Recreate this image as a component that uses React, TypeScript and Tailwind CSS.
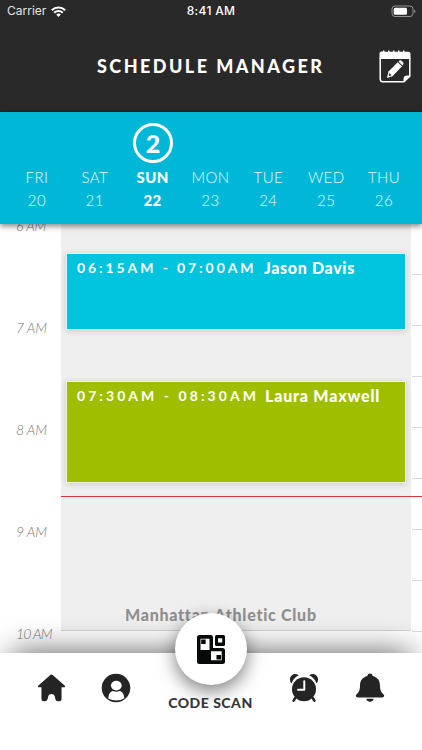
import React from "react";

const days = [
  { name: "FRI", date: "20" },
  { name: "SAT", date: "21" },
  { name: "SUN", date: "22", count: 2 },
  { name: "MON", date: "23" },
  { name: "TUE", date: "24" },
  { name: "WED", date: "25" },
  { name: "THU", date: "26" },
];

function StatusBar() {
  return (
    <div className="grid h-[22px] grid-cols-3 items-center pl-[7px] pr-[6px] font-['Inter','Liberation_Sans',sans-serif] text-[12px] leading-none text-white">
      <div className="flex items-center gap-[5px]">
        <span className="text-[12px] text-[#e4e4e4]">Carrier</span>
        <svg width="15" height="11" viewBox="0 0 15 11" fill="none" stroke="white" strokeWidth="2">
          <path d="M.8 4.2a9.7 9.7 0 0 1 13.4 0" />
          <path d="M3.2 6.7a6.2 6.2 0 0 1 8.6 0" />
          <path d="M5.2 8.5a3.3 3.3 0 0 1 4.6 0L7.5 10.9z" fill="white" stroke="none" />
        </svg>
      </div>
      <div className="-ml-px text-center font-medium tracking-[0.3px] whitespace-nowrap">8:41 AM</div>
      <svg className="justify-self-end" width="26" height="13" viewBox="0 0 26 13">
        <rect x="2" y="1" width="21" height="10.5" rx="3" fill="none" stroke="#929292" />
        <rect x="3.7" y="2.7" width="13.3" height="7.1" rx="1.5" fill="white" />
        <path d="M24.3 4.4v3.7c1.6-.5 1.6-3.2 0-3.7" fill="#929292" />
      </svg>
    </div>
  );
}

function NoteIcon() {
  return (
    <svg width="34" height="36" viewBox="0 0 34 36">
      <path d="M1.500 10V4.500Q1.500 2.500 3.500 2.500H5V1.500h1.500v1.300H10V1.500h1.500v1.300H15V1.500h1.500v1.300H20V1.500h1.500v1.300H25V1.500h1.500v1.300H30.500q2 0 2 2V10z" fill="white" />
      <path d="M2.200 9v21q0 2.800 2.800 2.800h21l5.800-5.500V9" fill="none" stroke="white" strokeWidth="1.500" />
      <path d="M26 33v-3.500q0-2.500 2.500-2.500H32z" fill="white" stroke="white" strokeLinejoin="round" />
      <path d="m9 29 1.500-6.500L19.700 13.300l4.300 4L14.500 27.300z" fill="white" />
      <path d="m20.500 12.500.8-.8q1.300-.8 2.500.3l1.100 1.100q1.200 1.300.2 2.600l-.7.7z" fill="white" />
      <path d="m11.300 24 2.300 2.300-2.300.7-.5-.5z" fill="#292929" />
    </svg>
  );
}

function HomeIcon() {
  return (
    <svg width="30" height="30" viewBox="0 0 30 30" fill="#242424">
      <path d="M13.8 1.5Q15 .7 16.2 1.5l12.7 11.2q1 1.2-.5 1.6H25.4V26q0 2.6-2.6 2.6h-1.2q-2 0-2.5-2l-.8-3.1c-.8-3-5.8-3-6.6 0l-.8 3.1q-.5 2-2.5 2H7.2Q4.6 28.6 4.6 26V14.3H1.7q-1.6-.4-.5-1.6z" />
    </svg>
  );
}

function UserIcon() {
  return (
    <svg width="30" height="30" viewBox="0 0 30 30">
      <circle cx="15" cy="15" r="14.3" fill="#242424" />
      <ellipse cx="15.3" cy="12.6" rx="5.4" ry="4.8" fill="white" />
      <path d="M7.3 25.5c.3-4.8 2.4-7 4.5-7.4q3.5 1.100 7 0c2.100.4 4.200 2.600 4.500 7.200q-3.800 2.200-8 2.200t-8-2z" fill="white" />
    </svg>
  );
}

function AlarmIcon() {
  return (
    <svg width="30" height="30" viewBox="0 0 30 30" fill="#242424">
      <path d="M2.500 10.500C-2 5.500 4-2 9.800 2.300C6.200 4 4 6.800 2.500 10.500M27.500 10.500C32 5.500 26-2 20.200 2.300C23.800 4 26 6.800 27.500 10.500" />
      <circle cx="15" cy="16.3" r="12" />
      <path d="m6.300 25-1.700 2.600M23.700 25l1.700 2.600" stroke="#242424" strokeWidth="2.600" strokeLinecap="round" />
      <path d="M15.300 8.200v8.500H9" fill="none" stroke="white" strokeWidth="2" strokeLinecap="round" strokeLinejoin="round" />
    </svg>
  );
}

function BellIcon() {
  return (
    <svg width="30" height="30" viewBox="0 0 30 30" fill="#242424">
      <path d="M12.4 3c.2-3.300 5-3.300 5.200 0C22.800 4.300 25 8 25 12.500c0 4.500 1 6.600 3.600 8.900 1.200 1.500.4 3-1.300 3H2.700c-1.700 0-2.500-1.500-1.300-3C4 19.100 5 17 5 12.500 5 8 7.200 4.300 12.400 3M11.300 25.700h7.400c-.4 4-7 4-7.400 0" />
    </svg>
  );
}

function CodeIcon() {
  return (
    <svg width="28" height="29" viewBox="0 0 28 29" fill="#050a08">
      <path d="M2.5 0H13.5Q16 0 16 2.5V13H25.500Q28 13 28 15.500V26.500Q28 29 25.500 29H2.500Q0 29 0 26.500V2.500Q0 0 2.500 0z" />
      <path d="M3.500 3.700H12.500V15H3.500zM14 16.300H24.700V25.200H14z" fill="white" />
      <rect x="4.2" y="4.500" width="4.500" height="4.500" />
      <rect x="19.500" y="20" width="4.600" height="4.500" />
      <rect x="18" y="0" width="10" height="11" rx="1.500" />
      <rect x="21" y="3.300" width="4.200" height="4.200" fill="white" />
    </svg>
  );
}

function Booking({ time, name, className, timeClass, nameClass }: { time: string; name: string; className: string; timeClass: string; nameClass: string }) {
  return (
    <div className={`mx-[5px] flex shrink-0 items-start border border-white/85 pl-[10px] leading-[20px] text-white shadow-[0_1px_6px_rgba(0,0,0,0.16)] ${className}`}>
      <span className={`mt-[4px] shrink-0 text-[14px] font-bold whitespace-nowrap ${timeClass}`}>{time}</span>
      <span className={`mt-[4px] text-[16px] font-black whitespace-nowrap ${nameClass}`}>{name}</span>
    </div>
  );
}

export default function App() {
  return (
    <div className="flex h-[750px] w-[422px] flex-col overflow-hidden bg-white font-['Lato','Liberation_Sans',sans-serif]">
      <header className="h-[112px] shrink-0 bg-[#292929]">
        <StatusBar />
        <div className="flex h-[90px] items-start pr-[10px] pl-[97px]">
          <h1 className="mt-[32px] w-[282px] text-[18px] leading-[24px] font-black tracking-[2.45px] whitespace-nowrap text-white">SCHEDULE MANAGER</h1>
          <div className="mt-[27px]"><NoteIcon /></div>
        </div>
      </header>

      <div className="relative z-10 grid h-[112px] shrink-0 grid-cols-7 bg-[#00b7d8] pr-[9px] pl-[8px] text-white shadow-[0_2px_6px_rgba(0,0,0,0.5)]">
        {days.map((day) => (
          <div key={day.name} className={`flex flex-col items-center pt-[10px] text-[15px] ${day.count ? "font-black" : "font-light text-[#e2fcff]"}`}>
            <div className="flex h-[42px] items-center">
              {day.count && <div className="ml-px flex size-[40px] items-center justify-center rounded-full border-[3px] border-white text-[25px] leading-none">{day.count}</div>}
            </div>
            <div className="mt-[2px] leading-[22px] tracking-[0.4px]">{day.name}</div>
            <div className="mt-[2px] leading-[20px] tracking-[0.5px]">{day.date}</div>
          </div>
        ))}
      </div>

      <main className="relative flex h-[429px] shrink-0 overflow-hidden">
        <div className="-mt-[50px] w-[61px] shrink-0 pl-[16px] text-[14px] text-[#777777] italic">
          {["6 AM", "7 AM", "8 AM", "9 AM", "10 AM"].map((hour) => (
            <div key={hour} className={`flex h-[102px] items-center font-light whitespace-nowrap ${hour === "10 AM" ? "tracking-[-0.8px]" : "tracking-[-0.2px]"}`}>{hour}</div>
          ))}
        </div>
        <div className="flex h-[407px] w-[350px] shrink-0 flex-col border-b border-[#d2d2d2] bg-[#efefef] pt-[29px]">
          <Booking time="06:15AM - 07:00AM" name="Jason Davis" className="h-[77px] bg-[#00c4de]" timeClass="w-[187px] tracking-[2.9px]" nameClass="tracking-[0.65px]" />
          <Booking time="07:30AM - 08:30AM" name="Laura Maxwell" className="mt-[51px] h-[102px] bg-[#9fbe00]" timeClass="w-[188px] tracking-[3.05px]" nameClass="tracking-[0.8px]" />
          <div className="mt-[109px] shrink-0 pl-[64px] text-[16px] leading-[46px] font-black tracking-[0.73px] whitespace-nowrap text-[#909090]">Manhattan Athletic Club</div>
        </div>
        <div className="ml-px flex grow flex-col">
          <div className="h-[51px] shrink-0 border-b border-[#d9d9d9]" />
          {[0, 1, 2, 3, 4, 5, 6].map((slot) => (
            <div key={slot} className="h-[51px] shrink-0 border-b border-[#d9d9d9]" />
          ))}
        </div>
        <div className="absolute top-[272px] right-0 left-[61px] h-px bg-[#dc3540]" />
      </main>

      <nav className="relative h-[97px] shrink-0 bg-white shadow-[0_-12px_32px_-12px_rgba(0,0,0,0.65)]">
        <div className="flex items-start px-[37px] pt-[20px]">
          <HomeIcon />
          <div className="ml-[35px]"><UserIcon /></div>
          <div className="ml-[158px]"><AlarmIcon /></div>
          <div className="ml-[36px]"><BellIcon /></div>
        </div>
        <div className="absolute -top-[40px] left-[175px] flex size-[72px] items-center justify-center rounded-full bg-white shadow-[0_6px_18px_rgba(0,0,0,0.5)]"><CodeIcon /></div>
        <div className="-ml-px text-center text-[14px] leading-[18px] font-black tracking-[0.5px] text-[#363638]"><span className="relative -top-[9px]">CODE SCAN</span></div>
      </nav>
    </div>
  );
}
